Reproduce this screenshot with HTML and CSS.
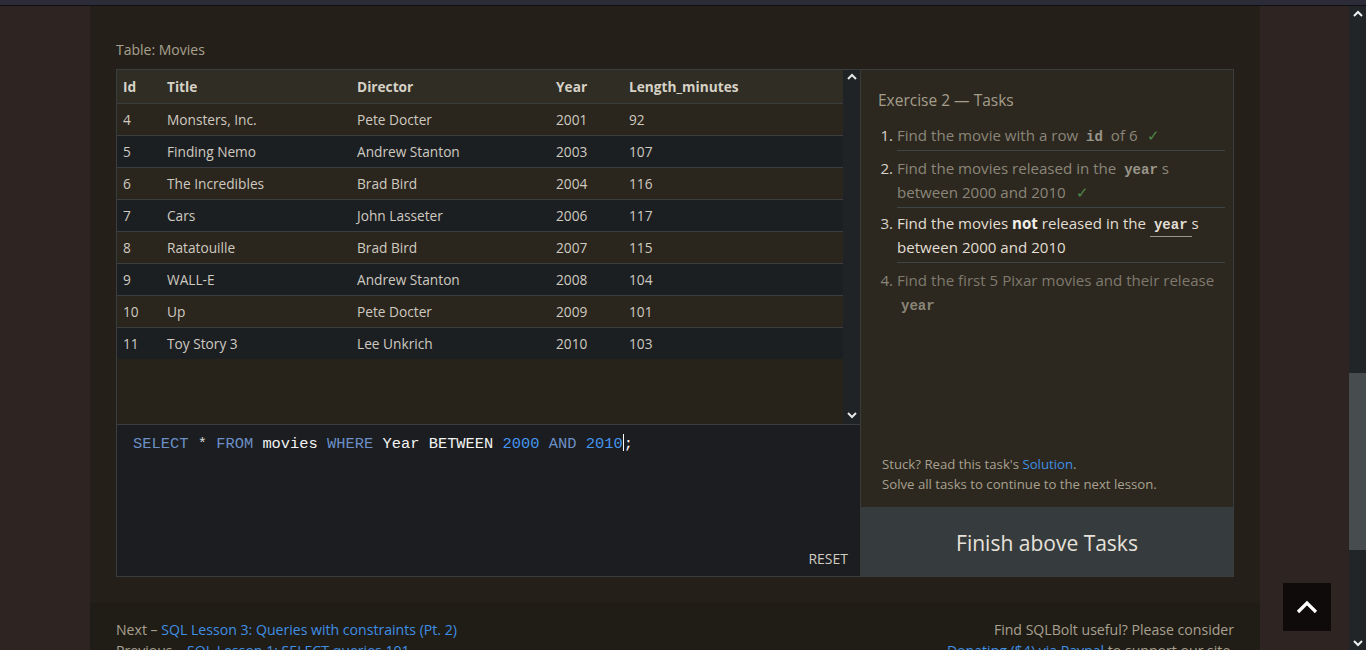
FILE: index.html
```html
<!DOCTYPE html>
<html lang="en">
<head>
<meta charset="utf-8">
<title>SQLBolt - Lesson 2</title>
<link rel="stylesheet" href="styles.css">
</head>
<body>
<div class="topbar"></div>
<div class="page">
  <div class="viewport">
    <div class="wrap">
      <section class="lesson">
        <div class="table-label">Table: Movies</div>
        <div class="exercise">
          <div class="left">
            <div class="table-area">
              <div class="table-scroll">
                <table class="movies">
                  <thead>
                    <tr><th class="c-id">Id</th><th class="c-title">Title</th><th class="c-dir">Director</th><th class="c-year">Year</th><th>Length_minutes</th></tr>
                  </thead>
                  <tbody>
                    <tr><td>4</td><td>Monsters, Inc.</td><td>Pete Docter</td><td>2001</td><td>92</td></tr>
                    <tr><td>5</td><td>Finding Nemo</td><td>Andrew Stanton</td><td>2003</td><td>107</td></tr>
                    <tr><td>6</td><td>The Incredibles</td><td>Brad Bird</td><td>2004</td><td>116</td></tr>
                    <tr><td>7</td><td>Cars</td><td>John Lasseter</td><td>2006</td><td>117</td></tr>
                    <tr><td>8</td><td>Ratatouille</td><td>Brad Bird</td><td>2007</td><td>115</td></tr>
                    <tr><td>9</td><td>WALL-E</td><td>Andrew Stanton</td><td>2008</td><td>104</td></tr>
                    <tr><td>10</td><td>Up</td><td>Pete Docter</td><td>2009</td><td>101</td></tr>
                    <tr><td>11</td><td>Toy Story 3</td><td>Lee Unkrich</td><td>2010</td><td>103</td></tr>
                  </tbody>
                </table>
              </div>
              <div class="mini-scroll">
                <svg class="arrow" width="10" height="7" viewBox="0 0 10 7"><path d="M1 6 L5 2 L9 6" fill="none" stroke="#e6e6e6" stroke-width="2"/></svg>
                <svg class="arrow" width="10" height="7" viewBox="0 0 10 7"><path d="M1 1 L5 5 L9 1" fill="none" stroke="#e6e6e6" stroke-width="2"/></svg>
              </div>
            </div>
            <div class="editor">
              <div class="code"><span class="kw">SELECT</span> <span class="op">*</span> <span class="kw">FROM</span> <span class="id">movies</span> <span class="kw">WHERE</span> <span class="id">Year BETWEEN</span> <span class="num">2000</span> <span class="kw">AND</span> <span class="num">2010</span><span class="cursor"></span><span class="id">;</span></div>
              <div class="reset">RESET</div>
            </div>
          </div>
          <div class="tasks">
            <h3 class="tasks-title">Exercise 2 — Tasks</h3>
            <ol class="task-list">
              <li class="done">Find the movie with a row <code>id</code> of 6 <span class="check">✓</span></li>
              <li class="done">Find the movies released in the <code>year</code>s between 2000 and 2010 <span class="check">✓</span></li>
              <li class="current">Find the movies <b>not</b> released in the <code>year</code>s between 2000 and 2010</li>
              <li class="todo">Find the first 5 Pixar movies and their release <code>year</code></li>
            </ol>
            <div class="stuck">
              <p>Stuck? Read this task's <a href="#">Solution</a>.</p>
              <p>Solve all tasks to continue to the next lesson.</p>
            </div>
            <div class="finish">Finish above Tasks</div>
          </div>
        </div>
      </section>
      <footer class="footer">
        <div class="nav">
          <p>Next – <a href="#">SQL Lesson 3: Queries with constraints (Pt. 2)</a></p>
          <p>Previous – <a href="#">SQL Lesson 1: SELECT queries 101</a></p>
        </div>
        <div class="donate">
          <p>Find SQLBolt useful? Please consider</p>
          <p><a href="#">Donating ($4) via Paypal</a> to support our site.</p>
        </div>
      </footer>
    </div>
  </div>
  <div class="vscroll">
    <svg class="arrow" width="10" height="7" viewBox="0 0 10 7"><path d="M1 6 L5 2 L9 6" fill="none" stroke="#f0f0f0" stroke-width="2"/></svg>
    <div class="track"><div class="thumb"></div></div>
    <svg class="arrow" width="10" height="7" viewBox="0 0 10 7"><path d="M1 1 L5 5 L9 1" fill="none" stroke="#f0f0f0" stroke-width="2"/></svg>
  </div>
</div>
<a class="to-top" href="#">
  <svg width="22" height="14" viewBox="0 0 22 14"><path d="M2 12 L11 3 L20 12" fill="none" stroke="#ffffff" stroke-width="3.2"/></svg>
</a>
</body>
</html>
```

FILE: styles.css
```css
html, body {
  margin: 0;
  padding: 0;
}
body {
  width: 1366px;
  height: 650px;
  overflow: hidden;
  background: #2e2422;
  font-family: "Open Sans", "Noto Sans", sans-serif;
  color: #cfcac0;
}
p { margin: 0; }
a { color: #3f8fe4; text-decoration: none; }

.topbar {
  height: 5px;
  background: #2c2b38;
  border-bottom: 1px solid #101014;
}
.page {
  display: flex;
  height: 644px;
}
.viewport {
  flex: 1;
  overflow: hidden;
}
.wrap {
  width: 1170px;
  margin-left: 90px;
}
.lesson {
  background: #242019;
  padding: 34px 26px 26px;
}
.table-label {
  font-size: 14px;
  line-height: 20px;
  color: #a8a08f;
  margin-bottom: 9px;
}
.exercise {
  display: flex;
  border: 1px solid #3a3d3d;
}
.left {
  width: 743px;
  display: flex;
  flex-direction: column;
}
.table-area {
  height: 354px;
  display: flex;
  background: #27231b;
}
.table-scroll {
  flex: 1;
}
.movies {
  width: 100%;
  border-collapse: collapse;
  font-size: 13.7px;
}
.movies th, .movies td {
  text-align: left;
  padding: 0 0 0 6px;
  border-bottom: 1px solid #3a3e40;
}
.movies th {
  height: 33px;
  background: #302d25;
  color: #d6d2c6;
  font-weight: 700;
}
.movies td {
  height: 31px;
  color: #cfcac0;
}
.movies tbody tr:nth-child(odd) { background: #2a251d; }
.movies tbody tr:nth-child(even) { background: #1c1f22; }
.movies tbody tr:last-child td { border-bottom: none; }
.c-id { width: 38px; }
.c-title { width: 184px; }
.c-dir { width: 193px; }
.c-year { width: 67px; }

.mini-scroll {
  width: 17px;
  background: #1f2326;
  display: flex;
  flex-direction: column;
  justify-content: space-between;
  align-items: center;
  padding: 3px 0 5px;
}
.arrow { display: block; }

.editor {
  height: 152px;
  border-top: 1px solid #3a3e40;
  background: #1b1d20;
  display: flex;
  flex-direction: column;
  justify-content: space-between;
  padding: 9px 12px 8px 16px;
  box-sizing: border-box;
}
.code {
  font-family: "Liberation Mono", "DejaVu Sans Mono", monospace;
  font-size: 15.4px;
  line-height: 18px;
  color: #e8e8e8;
  white-space: pre;
}
.kw { color: #6b8fc6; }
.op { color: #dadada; }
.id { color: #f2f2f2; }
.num { color: #4595ee; }
.cursor {
  display: inline-block;
  width: 1px;
  height: 17px;
  background: #ffffff;
  vertical-align: -3px;
}
.reset {
  align-self: flex-end;
  font-size: 14px;
  line-height: 18px;
  color: #d2cdc2;
}

.tasks {
  flex: 1;
  border-left: 1px solid #3a3b37;
  background: #2c281f;
  display: flex;
  flex-direction: column;
}
.tasks-title {
  margin: 0;
  padding: 18px 8px 0 17px;
  font-size: 15.5px;
  line-height: 24px;
  font-weight: 400;
  color: #a59d8c;
}
.task-list {
  margin: 6px 8px 0 17px;
  padding-left: 19px;
  font-size: 15.1px;
  line-height: 24px;
}
.task-list li {
  padding: 5px 0 3px;
  border-bottom: 1px solid #3c4548;
}
.task-list li.current { padding-top: 3px; }
.task-list li:last-child { border-bottom: none; }
.task-list li::marker { color: #d8d4c9; }
.task-list li.todo::marker { color: #8a8579; }
.task-list code {
  font-family: "Liberation Mono", "DejaVu Sans Mono", monospace;
  font-weight: 700;
  font-size: 14px;
  line-height: 16px;
  padding: 0 4px;
}
.done { color: #8b8679; }
.done code { color: #9a958a; }
.current { color: #e2ded3; }
.current b { color: #f2efe8; }
.current code {
  color: #e2ded3;
  border-bottom: 1px solid #9b968a;
  padding-bottom: 3px;
}
.todo { color: #7f7a6e; }
.todo code { color: #8a8579; }
.check {
  color: #4e8a49;
  margin-left: 6px;
  line-height: 16px;
}
.stuck {
  margin-top: auto;
  padding: 0 8px 13px 21px;
  font-size: 13.2px;
  line-height: 20px;
  color: #a8a08f;
}
.finish {
  height: 69px;
  padding-top: 3px;
  box-sizing: border-box;
  background: #363b3e;
  color: #e6e2da;
  font-size: 21px;
  display: flex;
  align-items: center;
  justify-content: center;
}

.footer {
  background: #201d17;
  display: flex;
  justify-content: space-between;
  padding: 16px 26px 0;
  font-size: 14.1px;
  line-height: 21px;
  color: #a8a08f;
}
.donate { text-align: right; }

.vscroll {
  width: 17px;
  background: #212527;
  display: flex;
  flex-direction: column;
  align-items: center;
  padding: 4px 0 3px;
  box-sizing: border-box;
}
.track {
  flex: 1;
  width: 100%;
  padding-top: 356px;
  box-sizing: border-box;
}
.thumb {
  height: 177px;
  background: #474c4e;
}
.to-top {
  position: fixed;
  left: 1283px;
  top: 583px;
  width: 48px;
  height: 48px;
  background: #0f0b0a;
  display: flex;
  align-items: center;
  justify-content: center;
}
```
